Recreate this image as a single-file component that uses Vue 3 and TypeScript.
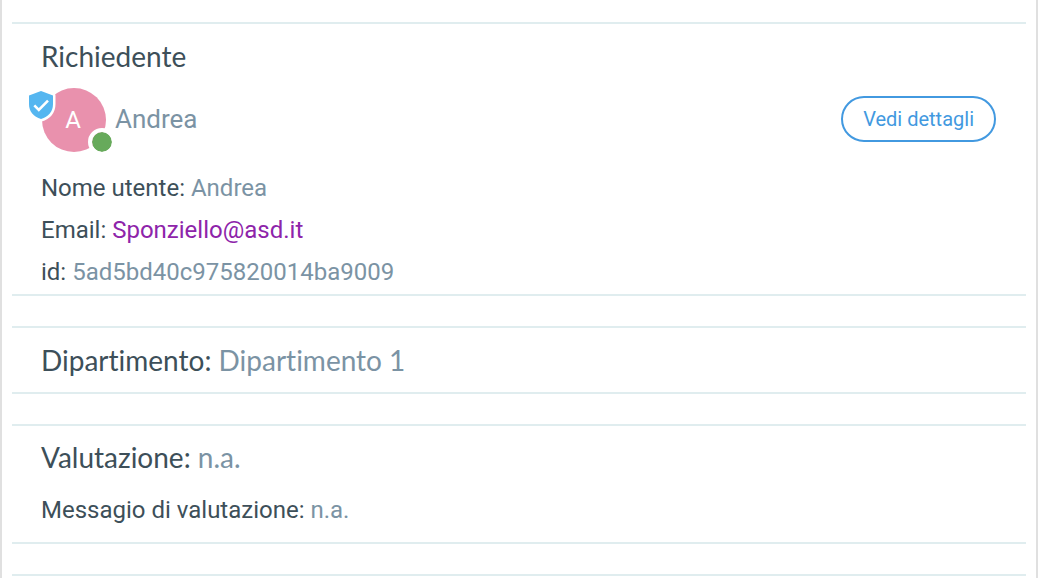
<script setup lang="ts">
interface Requester {
  name: string
  email: string
  id: string
}

const requester: Requester = {
  name: 'Andrea',
  email: 'Sponziello@asd.it',
  id: '5ad5bd40c975820014ba9009',
}
const department = 'Dipartimento 1'
const rating = 'n.a.'
const ratingMessage = 'n.a.'
</script>

<template>
  <main class="panel">
    <section class="card">
      <h2 class="title">Richiedente</h2>
      <div class="person">
        <div class="avatar">
          <span class="initial">{{ requester.name.charAt(0) }}</span>
          <svg class="shield" viewBox="0 0 30 34" aria-hidden="true">
            <path
              d="M15 3 L27 7.6 V16 C27 23.5 22.5 29 15 31 C7.5 29 3 23.5 3 16 V7.6 Z"
              fill="#55b6f0"
              stroke="#fff"
              stroke-width="5"
              stroke-linejoin="round"
              paint-order="stroke"
            />
            <path d="M8.3 17.3 L12.8 21.8 L22 12.6" fill="none" stroke="#fff" stroke-width="2.6" />
          </svg>
          <span class="status"></span>
        </div>
        <span class="name">{{ requester.name }}</span>
        <button class="details" type="button">Vedi dettagli</button>
      </div>
      <dl class="fields">
        <div class="field"><dt>Nome utente:</dt> <dd>{{ requester.name }}</dd></div>
        <div class="field">
          <dt>Email:</dt> <dd><a :href="`mailto:${requester.email}`">{{ requester.email }}</a></dd>
        </div>
        <div class="field"><dt>id:</dt> <dd>{{ requester.id }}</dd></div>
      </dl>
    </section>

    <section class="card">
      <h2 class="title">Dipartimento: <span class="value">{{ department }}</span></h2>
    </section>

    <section class="card rating">
      <h2 class="title">Valutazione: <span class="value">{{ rating }}</span></h2>
      <p class="message">Messagio di valutazione: <span class="value">{{ ratingMessage }}</span></p>
    </section>

    <hr class="next" />
  </main>
</template>

<style>
body {
  background: #fff;
}
</style>

<style scoped>
.panel {
  box-sizing: border-box;
  min-height: 100vh;
  padding: 22px 10px 2px;
  border: solid #e0e0e0;
  border-width: 0 2px;
  color: #3d4f59;
  font-family: Roboto, "Liberation Sans", sans-serif;
  font-size: 24px;
  line-height: 42px;
}

.card {
  padding: 0 29px;
  margin-bottom: 30px;
  border: solid #e0edef;
  border-width: 2px 0;
}

.title {
  margin: 0;
  font-family: Lato, Roboto, sans-serif;
  font-size: 28px;
  font-weight: 400;
  font-variant-ligatures: none;
  line-height: 64px;
}

.value,
dd {
  color: #7b93a4;
}

.person {
  display: flex;
  align-items: center;
  padding: 0 1px;
}

.avatar {
  position: relative;
  display: flex;
  align-items: center;
  justify-content: center;
  width: 64px;
  height: 64px;
  border-radius: 50%;
  background: #e991ad;
  color: #fff;
}

.initial {
  padding-right: 2px;
}

.shield {
  position: absolute;
  top: 0;
  left: -16px;
  width: 30px;
  height: 34px;
  overflow: visible;
}

.status {
  position: absolute;
  right: -10px;
  bottom: -4px;
  width: 20px;
  height: 20px;
  border: 4px solid #fff;
  border-radius: 50%;
  background: #67aa5b;
  background-clip: padding-box;
}

.name {
  padding-bottom: 2px;
  margin-left: 9px;
  color: #7b93a4;
  font-size: 26px;
}

.details {
  margin: 0 0 2px auto;
  padding: 0 20px;
  height: 46px;
  border: 2px solid #4299e0;
  border-radius: 23px;
  background: #fff;
  color: #4299e0;
  font-family: inherit;
  font-size: 20px;
}

.fields {
  margin: 0;
  padding: 15px 0 1px;
}

dt,
dd {
  display: inline;
  margin: 0;
}

a {
  color: #8e24aa;
  text-decoration: none;
}

.rating {
  padding-bottom: 11px;
}

.rating .title {
  line-height: 63px;
}

.message {
  margin: 0;
}

.next {
  margin: 0;
  border: 0;
  border-top: 2px solid #e0edef;
}
</style>
